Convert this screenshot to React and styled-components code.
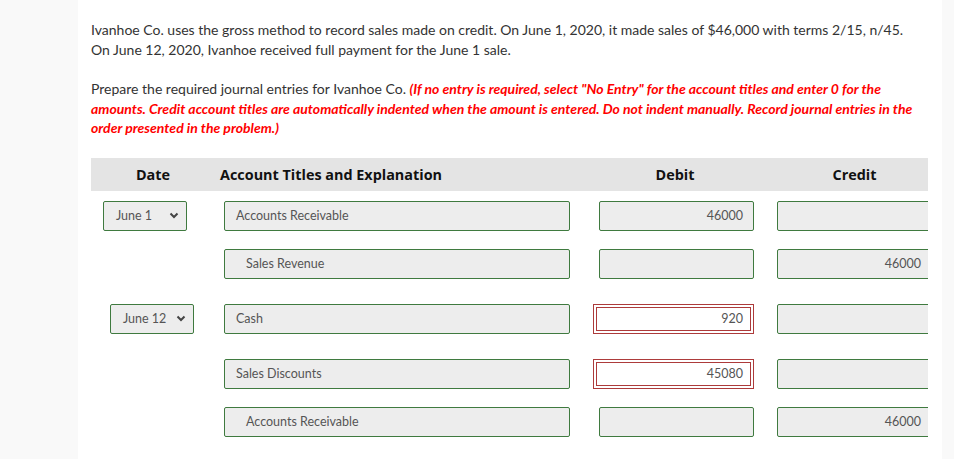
import React from 'react';
import styled, { createGlobalStyle, css } from 'styled-components';

const GlobalStyle = createGlobalStyle`
  html, body {
    margin: 0;
    padding: 0;
    background: #f9f9f9;
    font-family: Lato, 'Open Sans', sans-serif;
  }
`;

const Page = styled.div`
  width: 954px;
  height: 459px;
  display: flex;
  overflow: hidden;
  background: #f9f9f9;
`;

const Panel = styled.main`
  margin-left: 78px;
  width: 864px;
  background: #fff;
  padding: 20px 0 0 13px;
  box-sizing: border-box;
`;

const Text = styled.p`
  margin: 0 0 20px;
  width: 830px;
  font-size: 14px;
  line-height: 19.5px;
  color: #333;
`;

const Note = styled.em`
  color: #f00;
  font-weight: 700;
`;

const Table = styled.div`
  width: 837px;
  overflow: hidden;
`;

const Grid = css`
  display: grid;
  grid-template-columns: 124px 370px 180px 1fr;
  align-items: center;
`;

const HeaderRow = styled.div`
  ${Grid};
  height: 33px;
  background: #e4e4e4;
  font-family: 'Open Sans', sans-serif;
  font-weight: 700;
  font-size: 14.4px;
  color: #111;
`;

const HeadCell = styled.div`
  text-align: ${({ align }) => align || 'center'};
  padding-left: ${({ pad }) => pad || 0}px;
  width: ${({ w }) => (w ? `${w}px` : 'auto')};
`;

const Row = styled.div`
  ${Grid};
  height: 30px;
  margin-top: ${({ spacing }) => spacing}px;
`;

const fieldBase = css`
  box-sizing: border-box;
  height: 30px;
  border: 1px solid #3f7a3f;
  border-radius: 2px;
  background: #ededed;
  font-family: Lato, sans-serif;
  font-size: 12.5px;
  color: #555;
  display: flex;
  align-items: center;
`;

const DateSelect = styled.div`
  ${fieldBase};
  width: 84px;
  margin-left: ${({ offset }) => offset}px;
  padding: 0 7px 0 12px;
  justify-content: space-between;
`;

const AccountField = styled.div`
  ${fieldBase};
  width: 346px;
  margin-left: 9px;
  padding-left: ${({ credit }) => (credit ? 21 : 11)}px;
`;

const AmountField = styled.div`
  ${fieldBase};
  width: 155px;
  margin-left: ${({ offset }) => offset}px;
  justify-content: flex-end;
  padding-right: 10px;

  ${({ invalid }) =>
    invalid &&
    css`
      width: 161px;
      margin-left: 8px;
      border: 4px double #ad3b3b;
      border-radius: 0;
      background: #fff;
      padding-right: 7px;
    `}
`;

const Chevron = () => (
  <svg width="10" height="7" viewBox="0 0 10 7">
    <polyline points="1.5,1.5 5,5 8.5,1.5" fill="none" stroke="#444" strokeWidth="2" />
  </svg>
);

const rows = [
  { spacing: 10, date: 'June 1', dateOffset: 12, account: 'Accounts Receivable', debit: '46000' },
  { spacing: 18, account: 'Sales Revenue', credit: '46000' },
  { spacing: 25, date: 'June 12', dateOffset: 19, account: 'Cash', debit: '920', invalid: true },
  { spacing: 25, account: 'Sales Discounts', debit: '45080', invalid: true },
  { spacing: 18, account: 'Accounts Receivable', credit: '46000' },
];

export default function App() {
  return (
    <Page>
      <GlobalStyle />
      <Panel>
        <Text>
          Ivanhoe Co. uses the gross method to record sales made on credit. On June 1, 2020, it made
          sales of $46,000 with terms 2/15, n/45. On June 12, 2020, Ivanhoe received full payment for
          the June 1 sale.
        </Text>
        <Text>
          Prepare the required journal entries for Ivanhoe Co.{' '}
          <Note>
            (If no entry is required, select "No Entry" for the account titles and enter 0 for the
            amounts. Credit account titles are automatically indented when the amount is entered. Do
            not indent manually. Record journal entries in the order presented in the problem.)
          </Note>
        </Text>
        <Table>
          <HeaderRow>
            <HeadCell>Date</HeadCell>
            <HeadCell align="left" pad={5}>
              Account Titles and Explanation
            </HeadCell>
            <HeadCell>Debit</HeadCell>
            <HeadCell pad={12} w={155}>
              Credit
            </HeadCell>
          </HeaderRow>
          {rows.map((r, i) => (
            <Row key={i} spacing={r.spacing}>
              <div>
                {r.date && (
                  <DateSelect offset={r.dateOffset}>
                    <span>{r.date}</span>
                    <Chevron />
                  </DateSelect>
                )}
              </div>
              <AccountField credit={!!r.credit}>{r.account}</AccountField>
              <AmountField offset={14} invalid={r.invalid}>
                {r.debit}
              </AmountField>
              <AmountField offset={12}>{r.credit}</AmountField>
            </Row>
          ))}
        </Table>
      </Panel>
    </Page>
  );
}
